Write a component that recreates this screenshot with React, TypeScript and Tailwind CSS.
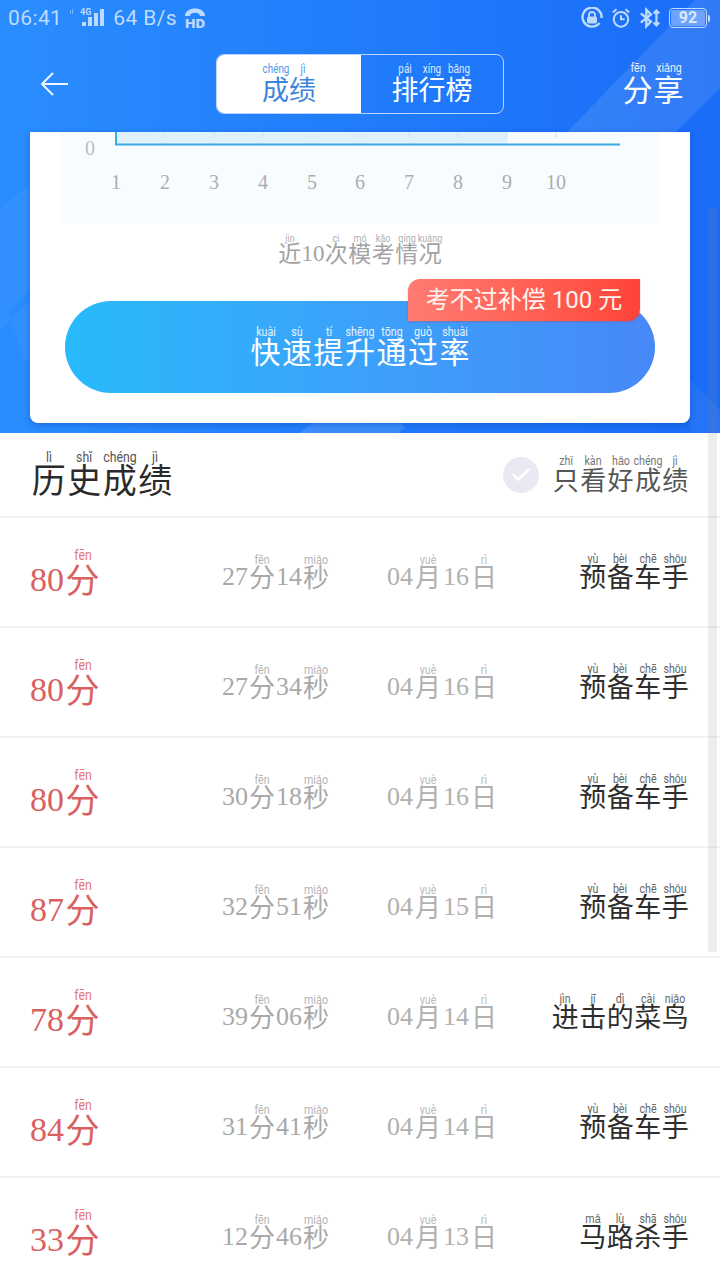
import { Check } from "lucide-react";

const serif = "font-['Liberation_Serif','Noto_Sans_CJK_SC',serif]";
const cjk = "font-['Noto_Sans_CJK_SC','Liberation_Serif',serif]";

type Seg = [string, string?];

// one character (or run of digits) with its pinyin on top
function Ruby({ segs, size, w, pySize = 12, pyTop = -9, pyClass = "" }: { segs: Seg[]; size: number; w?: number; pySize?: number; pyTop?: number; pyClass?: string }) {
  return (
    <span className="inline-flex items-end">
      {segs.map(([t, py], i) => (
        <span key={i} className="relative inline-block shrink-0 text-center" style={{ fontSize: size, lineHeight: `${size + 4}px`, width: py ? w ?? size : undefined }}>
          {py && (
            <span className={`absolute left-1/2 -translate-x-1/2 scale-x-[0.82] whitespace-nowrap font-['Roboto',sans-serif] font-normal ${pyClass}`} style={{ fontSize: pySize, lineHeight: "12px", top: pyTop }}>
              {py}
            </span>
          )}
          <span className={py ? cjk : serif}>{t}</span>
        </span>
      ))}
    </span>
  );
}

const rows = [
  { score: "80", min: "27", sec: "14", mon: "04", day: "16", rank: [["预", "yù"], ["备", "bèi"], ["车", "chē"], ["手", "shǒu"]] },
  { score: "80", min: "27", sec: "34", mon: "04", day: "16", rank: [["预", "yù"], ["备", "bèi"], ["车", "chē"], ["手", "shǒu"]] },
  { score: "80", min: "30", sec: "18", mon: "04", day: "16", rank: [["预", "yù"], ["备", "bèi"], ["车", "chē"], ["手", "shǒu"]] },
  { score: "87", min: "32", sec: "51", mon: "04", day: "15", rank: [["预", "yù"], ["备", "bèi"], ["车", "chē"], ["手", "shǒu"]] },
  { score: "78", min: "39", sec: "06", mon: "04", day: "14", rank: [["进", "jìn"], ["击", "jī"], ["的", "dì"], ["菜", "cài"], ["鸟", "niǎo"]] },
  { score: "84", min: "31", sec: "41", mon: "04", day: "14", rank: [["预", "yù"], ["备", "bèi"], ["车", "chē"], ["手", "shǒu"]] },
  { score: "33", min: "12", sec: "46", mon: "04", day: "13", rank: [["马", "mǎ"], ["路", "lù"], ["杀", "shā"], ["手", "shǒu"]] },
] as { score: string; min: string; sec: string; mon: string; day: string; rank: Seg[] }[];

function StatusBar() {
  return (
    <div className="flex h-[36px] items-center justify-between pl-[8px] pr-[10px] text-[#bfdaff]">
      <div className="flex items-center font-['Roboto',sans-serif]">
        <span className="text-[21px] leading-none tracking-[0.4px]">06:41</span>
        <svg width="38" height="24" viewBox="0 0 38 24" className="ml-[8px]" fill="currentColor">
          <rect x="0" y="4" width="1" height="4" opacity="0.5" />
          <rect x="2" y="3" width="1" height="5" opacity="0.5" />
          <text x="10" y="9" fontSize="9" fontWeight="700" fontFamily="Roboto">4G</text>
          <rect x="12" y="16" width="4" height="4" />
          <rect x="18" y="11" width="4" height="9" />
          <rect x="24" y="7" width="4" height="13" />
          <rect x="30" y="3" width="4" height="17" />
        </svg>
        <span className="ml-[5px] text-[21px] leading-none tracking-[0.4px]">64 B/s</span>
        <svg width="22" height="24" viewBox="0 0 22 24" className="ml-[7px]" fill="currentColor">
          <path d="M1 10 C1 0 21 0 21 10 L16 10 C16 5.5 6 5.5 6 10 Z" />
          <text x="1" y="22" fontSize="13" fontWeight="900" fontFamily="Roboto" textLength="20" lengthAdjust="spacingAndGlyphs">HD</text>
        </svg>
      </div>
      <div className="flex items-center gap-[8px]">
        <svg width="22" height="22" viewBox="0 0 22 22" fill="none" stroke="currentColor" strokeWidth="2.4">
          <path d="M18.5 16 A9.5 9.5 0 1 1 20.5 11" />
          <rect x="6.5" y="10" width="9" height="6" rx="1" fill="currentColor" strokeWidth="1" />
          <path d="M8 10 V8 a3 3 0 0 1 6 0 V10" strokeWidth="1.8" />
        </svg>
        <svg width="20" height="22" viewBox="0 0 22 22" fill="none" stroke="currentColor" strokeWidth="2.2">
          <circle cx="11" cy="12.5" r="8" />
          <path d="M11 8 V12.5 H15" />
          <path d="M2 5 L6 1.5 M20 5 L16 1.5" />
        </svg>
        <svg width="22" height="22" viewBox="0 0 24 22" fill="none" stroke="currentColor" strokeWidth="2.6">
          <path d="M2 6 L13 15 L8 20 V2 L13 7 L2 16" />
          <path d="M19 3 V19 M16 6 L19 3 L22 6 M16 16 L19 19 L22 16" strokeWidth="2.4" />
        </svg>
        <div className="flex items-center">
          <div className="flex h-[20px] w-[38px] items-center justify-center rounded-[4px] border border-[#bfdaff] p-[1px]">
            <div className="flex h-full w-full items-center justify-center rounded-[2px] bg-[#6ea3ff] font-['Roboto',sans-serif] text-[16px] font-bold leading-none text-[#dbe9ff]">92</div>
          </div>
          <div className="ml-[1px] h-[7px] w-[2px] rounded-r-sm bg-[#bfdaff]" />
        </div>
      </div>
    </div>
  );
}

function Header() {
  return (
    <div className="relative flex h-[96px] items-start">
      <svg width="30" height="24" viewBox="0 0 30 24" className="ml-[40px] mt-[36px]" fill="none" stroke="#eef5ff" strokeWidth="2">
        <path d="M28 12 H2 M13 1 L2 12 L13 23" />
      </svg>
      <div className="ml-[146px] mt-[18px] flex h-[60px] w-[288px] overflow-hidden rounded-[8px] border border-[#b9d4ff]">
        <div className="flex w-[144px] items-center justify-center bg-white pt-[10px] text-[#3b86dc]">
          <Ruby size={27} pySize={12} pyTop={-10} pyClass="text-[#4f97e6]" segs={[["成", "chéng"], ["绩", "jì"]]} />
        </div>
        <div className="flex flex-1 items-center justify-center pt-[10px] text-white">
          <Ruby size={27} pySize={12} pyTop={-10} pyClass="text-[#dcebff]" segs={[["排", "pái"], ["行", "xíng"], ["榜", "bǎng"]]} />
        </div>
      </div>
      <div className="ml-[118px] mt-[35px] text-white">
        <Ruby size={30} w={31} pySize={13} pyTop={-9} pyClass="text-[#e6f0ff]" segs={[["分", "fēn"], ["享", "xiǎng"]]} />
      </div>
    </div>
  );
}

function Chart() {
  const xs = [116, 165, 214, 263, 312, 360, 409, 458, 507, 556];
  return (
    <svg width="600" height="92" viewBox="60 132 600 92" className="mx-auto block bg-[#f7fcff]">
      <rect x="116" y="132" width="391" height="12" fill="#dff1fc" />
      {xs.slice(1).map((x) => (
        <line key={x} x1={x} x2={x} y1="132" y2="138" stroke="#cfe3f2" />
      ))}
      <path d="M116 132 V144.5 H620" fill="none" stroke="#3fa9e6" strokeWidth="2" />
      <text x="90" y="155" textAnchor="middle" fontSize="20" fill="#bdbdbd" fontFamily="Liberation Serif">0</text>
      {xs.map((x, i) => (
        <text key={x} x={x} y="189" textAnchor="middle" fontSize="20" fill="#adadad" fontFamily="Liberation Serif">{i + 1}</text>
      ))}
    </svg>
  );
}

function Card() {
  return (
    <div className="mx-[30px] h-[291px] rounded-b-[8px] bg-white shadow-[0_2px_6px_rgba(0,60,160,0.35)]">
      <Chart />
      <div className="mt-[15px] flex justify-center text-[#a3a3a3]">
        <Ruby size={23} w={23.5} pySize={11} pyTop={-6} pyClass="text-[#b0b0b0]" segs={[["近", "jìn"], ["10"], ["次", "cì"], ["模", "mó"], ["考", "kǎo"], ["情", "qíng"], ["况", "kuàng"]]} />
      </div>
      <div className="relative mx-[35px] mt-[34px] flex h-[92px] items-center justify-center rounded-full bg-gradient-to-r from-[#27bafb] to-[#4788f8] pt-[8px] text-white">
        <Ruby size={30} w={31.5} pySize={13} pyTop={-7} pyClass="text-[#e6f4ff]" segs={[["快", "kuài"], ["速", "sù"], ["提", "tí"], ["升", "shēng"], ["通", "tōng"], ["过", "guò"], ["率", "shuài"]]} />
        <div className="absolute right-[15px] top-[-22px] flex h-[42px] w-[232px] items-center justify-center rounded-tl-[12px] rounded-br-[12px] bg-gradient-to-r from-[#ff7b72] to-[#ff4338] font-['Roboto','Noto_Sans_CJK_SC',sans-serif] text-[24px] leading-none text-[#fff3f0] shadow-[0_1px_2px_rgba(200,60,60,0.4)]">
          考不过补偿 100 元
        </div>
      </div>
    </div>
  );
}

export default function App() {
  return (
    <div className="relative h-[1280px] w-[720px] overflow-hidden bg-white">
      <div className="relative h-[433px] overflow-hidden bg-gradient-to-r from-[#2a8dff] to-[#1a6cf7]">
        <svg width="720" height="433" viewBox="0 0 720 433" className="absolute left-0 top-0">
          <path d="M567 132 L695 0 L720 0 L720 88 L676 132 Z" fill="#ffffff" fillOpacity="0.1" />
          <path d="M0 210 L30 183 V290 L8 310 L24 360 H30 V300 L0 330 Z" fill="#ffffff" fillOpacity="0.04" />
          <path d="M690 380 L720 410 V433 H690 Z" fill="#ffffff" fillOpacity="0.05" />
          <path d="M300 433 L312 423 H402 L405 428 L398 433 Z" fill="#ffffff" fillOpacity="0.12" />
        </svg>
        <div className="relative">
          <StatusBar />
          <Header />
          <Card />
        </div>
      </div>

      <div className="flex h-[85px] items-center justify-between border-b-2 border-[#f3f3f3] pl-[31px] pr-[31px]">
        <div className="mt-[10px] text-[#2b2b2b]">
          <Ruby size={34} w={35.5} pySize={15} pyTop={-9} pyClass="text-[#555]" segs={[["历", "lì"], ["史", "shǐ"], ["成", "chéng"], ["绩", "jì"]]} />
        </div>
        <div className="flex items-center">
          <div className="flex h-[36px] w-[36px] items-center justify-center rounded-full bg-[#e8e9f3]">
            <Check size={22} strokeWidth={3} className="text-white" />
          </div>
          <div className="ml-[13px] mt-[10px] text-[#555]">
            <Ruby size={26} w={27.4} pySize={13} pyTop={-9} pyClass="text-[#777]" segs={[["只", "zhǐ"], ["看", "kàn"], ["好", "hǎo"], ["成", "chéng"], ["绩", "jì"]]} />
          </div>
        </div>
      </div>

      {rows.map((r, i) => (
        <div key={i} className="grid h-[110px] grid-cols-[192px_165px_1fr_auto] items-center border-b-2 border-[#f3f3f3] pl-[30px] pr-[31px] pt-[8px]">
          <div className="mt-[6px] text-[#d9605f]">
            <Ruby size={34} w={37} pySize={15} pyTop={-11} pyClass="text-[#e07a78]" segs={[[r.score], ["分", "fēn"]]} />
          </div>
          <div className="text-[#a9a9a9]">
            <Ruby size={26} w={28} pySize={13} pyTop={-7} pyClass="text-[#b5b5b5]" segs={[[r.min], ["分", "fēn"], [r.sec], ["秒", "miǎo"]]} />
          </div>
          <div className="text-[#b0b0b0]">
            <Ruby size={26} w={30} pySize={13} pyTop={-7} pyClass="text-[#bbb]" segs={[[r.mon], ["月", "yuè"], [r.day], ["日", "rì"]]} />
          </div>
          <div className="text-[#2e2e2e]">
            <Ruby size={27} w={27.5} pySize={13} pyTop={-7} pyClass="text-[#666]" segs={r.rank} />
          </div>
        </div>
      ))}

      <div className="absolute left-[708px] top-[208px] h-[744px] w-[9px] bg-[#888]/15" />
    </div>
  );
}
